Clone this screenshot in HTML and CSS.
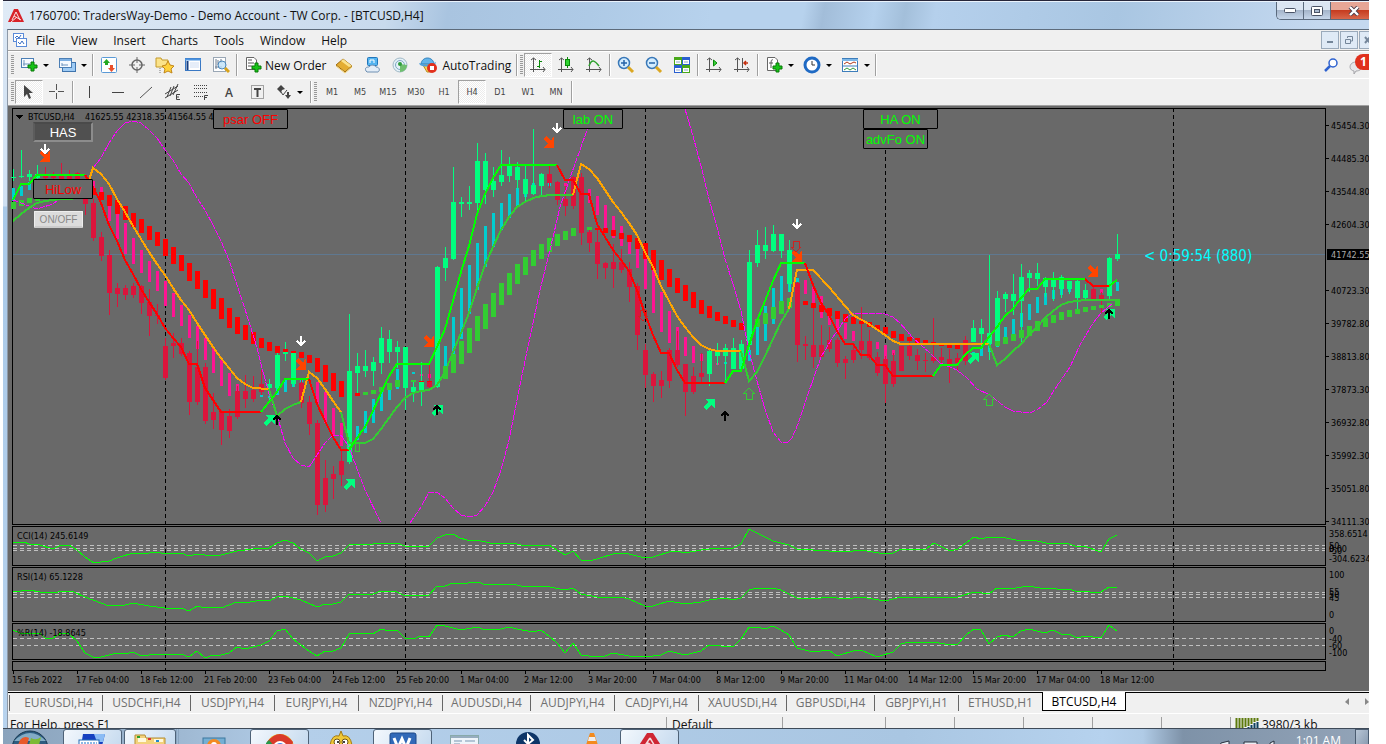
FILE: index.html
```html
<!DOCTYPE html>
<html lang="en">
<head>
    <meta charset="UTF-8">
    <meta name="viewport" content="width=device-width, initial-scale=1.0">
    <title>1760700: TradersWay-Demo - [BTCUSD,H4]</title>
    <link rel="stylesheet" href="styles.css">
</head>
<body>
    <div class="desktop">
        <div class="window">
            <!-- Title bar -->
            <header class="title-bar">
                <svg class="logo" width="16" height="16" viewBox="0 0 16 16"><path d="M6 1H10L16 14H0Z" fill="#d8232a"/><path d="M8 4L4 12M8 4L12 12M6 8L13 12M3 14L9 9" stroke="#fbe4e4" fill="none"/></svg>
                <h1>1760700: TradersWay-Demo - Demo Account - TW Corp. - [BTCUSD,H4]</h1>
                <div class="window-buttons">
                    <button class="minimize" aria-label="Minimize"><svg width="12" height="5"><rect x=".5" y=".5" width="11" height="4" rx="1" fill="#fff" stroke="#4a5366"/></svg></button>
                    <button class="maximize" aria-label="Maximize"><svg width="12" height="10"><rect x=".5" y=".5" width="11" height="9" rx="1" fill="#fff" stroke="#4a5366"/><rect x="3.5" y="3.5" width="5" height="3" fill="#a9b9cf" stroke="#4a5366"/></svg></button>
                    <button class="close" aria-label="Close"><svg width="12" height="10" viewBox="0 0 12 10"><path d="M2 1L10 9M10 1L2 9" stroke="#4a3a48" stroke-width="4"/><path d="M2 1L10 9M10 1L2 9" stroke="#fff" stroke-width="2.4"/></svg></button>
                </div>
            </header>

            <div class="client">
                <!-- Menu -->
                <nav class="menu-bar">
                    <svg width="16" height="16" viewBox="0 0 16 16"><rect x="1.5" y="1.5" width="10" height="8" fill="#fff" stroke="#5b8bd8"/><path d="M3 6L5 4L7 6L9 3" stroke="#3b6fc4" fill="none"/><rect x="4.5" y="6.5" width="10" height="8" fill="#fff" stroke="#5b8bd8"/><path d="M6 10L8 12L10 9L12 12" stroke="#3b6fc4" fill="none"/></svg>
                    <a href="#">File</a><a href="#">View</a><a href="#">Insert</a><a href="#">Charts</a><a href="#">Tools</a><a href="#">Window</a><a href="#">Help</a>
                    <div class="child-buttons">
                        <button aria-label="Minimize chart"><svg width="8" height="8"><path d="M1 6H7" stroke="#74869a" stroke-width="2"/></svg></button>
                        <button aria-label="Restore chart"><svg width="8" height="8"><path d="M2.5 2V.5H7.5V5H6M.5 3.5H5.5V7.5H.5Z" fill="none" stroke="#74869a"/></svg></button>
                        <button aria-label="Close chart"><svg width="8" height="8"><path d="M1 1L6 7M6 1L1 7" stroke="#74869a" stroke-width="2"/></svg></button>
                    </div>
                </nav>

                <!-- Standard toolbar -->
                <div class="toolbar">
                    <span class="grip"></span>
                    <button class="tool drop" aria-label="New chart"><svg width="18" height="18" viewBox="0 0 18 18"><rect x="1.5" y="2.5" width="12" height="9" fill="#f6faff" stroke="#4c7fb5"/><path d="M4 4V10M3 8H10" stroke="#6d93bd"/><path d="M8 9H11V6H14V9H17V12H14V15H11V12H8Z" fill="#16c316" stroke="#087808"/></svg></button>
                    <button class="tool drop" aria-label="Profiles"><svg width="18" height="18" viewBox="0 0 18 18"><rect x="4.5" y="6.5" width="13" height="9" fill="#9ecbf5" stroke="#3f74ad"/><rect x="1.5" y="2.5" width="12" height="9" fill="#f6faff" stroke="#4c7fb5"/><path d="M2 4H13" stroke="#7eb0e3" stroke-width="2"/><path d="M4 7V10M4 9H10" stroke="#6d93bd"/></svg></button>
                    <span class="separator"></span>
                    <button class="tool" aria-label="Market Watch"><svg width="18" height="18" viewBox="0 0 18 18"><rect x="1.5" y="1.5" width="15" height="15" rx="1" fill="#fff" stroke="#5a9ad6"/><path d="M6.5 3L10 7H8V9H5V7H3Z" fill="#23a823"/><path d="M11.500 16L8 12H10V9H13V12H15Z" fill="#e8502c"/></svg></button>
                    <button class="tool" aria-label="Data Window"><svg width="18" height="18" viewBox="0 0 18 18"><circle cx="9" cy="9" r="5" fill="none" stroke="#666" stroke-width="1.5"/><path d="M9 1V7M9 11V17M1 9H7M11 9H17" stroke="#666"/></svg></button>
                    <button class="tool" aria-label="Navigator"><svg width="20" height="18" viewBox="0 0 20 18"><path d="M1 2H6L7 4H13V11H1Z" fill="#fbe38a" stroke="#c49a2a"/><path d="M5 12V17" stroke="#777" stroke-dasharray="1 1"/><path d="M13 5L15 9L19 10L16 13L17 17L13 15L9 17L10 13L7 10L11 9Z" fill="#ffd23c" stroke="#c1861a"/></svg></button>
                    <button class="tool" aria-label="Terminal"><svg width="18" height="18" viewBox="0 0 18 18"><rect x="1.5" y="2.5" width="15" height="12" fill="#fff" stroke="#3a78c3"/><path d="M1 3.5H17" stroke="#4d94e0" stroke-width="2"/><path d="M3.5 5V14" stroke="#173e80" stroke-width="2"/><path d="M6 7H15M6 9H15M6 11H15" stroke="#cddcf2"/></svg></button>
                    <button class="tool" aria-label="Strategy Tester"><svg width="18" height="18" viewBox="0 0 18 18"><rect x="1.5" y="1.5" width="12" height="14" fill="#fff" stroke="#9aa7b5"/><path d="M4 3V13M3 11H10M6 4V9M9 3V7" stroke="#6d7d90"/><circle cx="10" cy="9" r="4" fill="#bfe1f8" fill-opacity=".8" stroke="#4b87bb"/><path d="M13 12L17 16" stroke="#d8a21b" stroke-width="3"/></svg></button>
                    <span class="separator"></span>
                    <button class="tool text"><svg width="18" height="18" viewBox="0 0 18 18"><path d="M2.5 1.5H10L12.5 4V13.5H2.5Z" fill="#fff" stroke="#666"/><path d="M4 4H8M4 7H10M4 10H8" stroke="#555"/><path d="M8 10H11V7H14V10H17V13H14V16H11V13H8Z" fill="#16c316" stroke="#087808"/></svg>New Order</button>
                    <button class="tool" aria-label="MetaEditor"><svg width="18" height="18" viewBox="0 0 18 18"><path d="M1 9L8 3L17 10L10 16Z" fill="#e4ad31" stroke="#9d6b11"/><path d="M8 3L17 10L14 11L6 5Z" fill="#fbe28c"/><path d="M1 10L10 17L17 11" stroke="#f0cf71" fill="none"/></svg></button>
                    <button class="tool" aria-label="Community"><svg width="18" height="18" viewBox="0 0 18 18"><rect x="4.5" y="1.5" width="10" height="8" rx="1" fill="#54b4f0" stroke="#2276bb"/><path d="M7 7V4H11V7" stroke="#fff" fill="none"/><path d="M3 15C1 11 5 11 6 11C8 8 12 9 13 11C17 11 17 15 15 16H4Z" fill="#e3edf7" stroke="#6e8fb2"/></svg></button>
                    <button class="tool" aria-label="Signals"><svg width="18" height="18" viewBox="0 0 18 18"><circle cx="9" cy="9" r="7" fill="#e4f1f8" stroke="#a0b8c6"/><circle cx="9" cy="9" r="4.5" fill="none" stroke="#7fa8c2"/><path d="M9 8V16C13 16 16 13 16 9Z" fill="#6fbf6f"/><circle cx="9" cy="8" r="2" fill="#2f9c3c"/></svg></button>
                    <button class="tool text"><svg width="20" height="18" viewBox="0 0 20 18"><path d="M2 8C3 0 14 0 15 8Z" fill="#63b4ea" stroke="#2e7fba"/><path d="M4 9L15 9L12 16H8Z" fill="#f8d457" stroke="#b98c1c"/><path d="M0 7C4 9 13 9 17 6L16 9C11 11 5 11 1 9Z" fill="#4da0dc"/><circle cx="13" cy="12" r="5" fill="#e2301d"/><rect x="11" y="10" width="4" height="4" fill="#fff"/></svg>AutoTrading</button>
                    <span class="separator"></span>
                    <span class="grip"></span>
                    <button class="tool active" aria-label="Bar chart"><svg width="16" height="16" viewBox="0 0 16 16"><path d="M3.5 1V15M0 12.500H15M1 3L3.500 1L6 3M13 10L15 12.500L13 15" stroke="#555" fill="none"/><path d="M9.500 3V11M9 4.500H12M7 9.500H9" stroke="#0a8a0a"/></svg></button>
                    <button class="tool" aria-label="Candlesticks"><svg width="16" height="16" viewBox="0 0 16 16"><path d="M3.5 1V15M0 12.500H15M1 3L3.500 1L6 3M13 10L15 12.500L13 15" stroke="#555" fill="none"/><path d="M9.5 0V11" stroke="#0a8a0a"/><rect x="7.5" y="2.5" width="4" height="6" fill="#2fd42f" stroke="#0a8a0a"/></svg></button>
                    <button class="tool" aria-label="Line chart"><svg width="16" height="16" viewBox="0 0 16 16"><path d="M3.5 1V15M0 12.500H15M1 3L3.500 1L6 3M13 10L15 12.500L13 15" stroke="#555" fill="none"/><path d="M3 9C6 1 9 4 13 9" stroke="#2ca02c" stroke-width="1.5" fill="none"/></svg></button>
                    <span class="separator"></span>
                    <button class="tool" aria-label="Zoom in"><svg width="18" height="18" viewBox="0 0 18 18"><circle cx="7" cy="7" r="5.5" fill="#d4edff" stroke="#3978b8" stroke-width="1.5"/><path d="M4 7H10M7 4V10" stroke="#2563a8" stroke-width="1.5"/><path d="M11 11L16 16" stroke="#dba722" stroke-width="3"/></svg></button>
                    <button class="tool" aria-label="Zoom out"><svg width="18" height="18" viewBox="0 0 18 18"><circle cx="7" cy="7" r="5.5" fill="#d4edff" stroke="#3978b8" stroke-width="1.5"/><path d="M4 7H10" stroke="#2563a8" stroke-width="1.5"/><path d="M11 11L16 16" stroke="#dba722" stroke-width="3"/></svg></button>
                    <button class="tool" aria-label="Tile windows"><svg width="18" height="18" viewBox="0 0 18 18"><path d="M1 1H9V9H1ZM9 9H17V17H9Z" fill="#48a81a"/><path d="M9 1H17V9H9ZM1 9H9V17H1Z" fill="#2a5fd0"/><path d="M2 4H8V8H2ZM10 4H16V8H10ZM2 12H8V16H2ZM10 12H16V16H10Z" fill="#fff"/><path d="M3 6H7M11 6H15M3 14H7M11 14H15" stroke="#8fa6c8"/></svg></button>
                    <span class="separator"></span>
                    <button class="tool" aria-label="Auto scroll"><svg width="16" height="16" viewBox="0 0 16 16"><path d="M3.5 1V15M0 12.500H15M1 3L3.500 1L6 3M13 10L15 12.500L13 15" stroke="#555" fill="none"/><path d="M7.500 3V9L11 6Z" fill="#3ad43a" stroke="#0a8a0a"/></svg></button>
                    <button class="tool" aria-label="Chart shift"><svg width="16" height="16" viewBox="0 0 16 16"><path d="M3.5 1V15M0 12.500H15M1 3L3.500 1L6 3M13 10L15 12.500L13 15M8.500 1V11" stroke="#555" fill="none"/><path d="M14 6H10M12 4L10 6L12 8" stroke="#c43010" stroke-width="1.5" fill="none"/></svg></button>
                    <span class="separator"></span>
                    <button class="tool drop" aria-label="Indicators"><svg width="18" height="18" viewBox="0 0 18 18"><path d="M2.5 1.5H10L12.5 4V14.5H2.5Z" fill="#fff" stroke="#666"/><path d="M8 4C6 3 6 5 6 12M4 7H8" stroke="#555" fill="none"/><path d="M8 10H11V7H14V10H17V13H14V16H11V13H8Z" fill="#16c316" stroke="#087808"/></svg></button>
                    <button class="tool drop" aria-label="Periods"><svg width="18" height="18" viewBox="0 0 18 18"><circle cx="9" cy="9" r="7" fill="#fff" stroke="#1f6ac4" stroke-width="3"/><path d="M9 5V9H12" stroke="#333" fill="none"/></svg></button>
                    <button class="tool drop" aria-label="Templates"><svg width="18" height="16" viewBox="0 0 18 16"><rect x="1.5" y="1.5" width="15" height="13" fill="#fff" stroke="#3d7dbb"/><path d="M1 3H17" stroke="#7cb7e8" stroke-width="2"/><path d="M3 7L6 5L9 7L13 5L15 6" stroke="#b03a1a" fill="none"/><path d="M1 9H17" stroke="#3d7dbb"/><path d="M3 13L6 11L9 13L12 11L15 13" stroke="#2e9a3c" fill="none"/></svg></button>
                    <span class="separator"></span>
                    <div class="toolbar-right">
                        <button aria-label="Search"><svg width="14" height="14" viewBox="0 0 14 14"><circle cx="9" cy="5" r="4" fill="#fff" stroke="#2e62cf" stroke-width="1.5"/><path d="M6 8L1 13" stroke="#2e62cf" stroke-width="2.5"/></svg></button>
                        <button class="chat" aria-label="Messages"><svg width="14" height="14" viewBox="0 0 14 14"><path d="M7 1C15 1 15 10 7 10L5 13V10C-1 9 0 1 7 1Z" fill="#e6e6e8" stroke="#a5a5aa"/></svg><span class="badge">1</span></button>
                    </div>
                </div>

                <!-- Line studies and timeframes -->
                <div class="toolbar">
                    <span class="grip"></span>
                    <button class="tool active" aria-label="Cursor"><svg width="14" height="16" viewBox="0 0 14 16"><path d="M2 1V13L5 10L7 15L9 14L7 9H11Z" fill="#444"/></svg></button>
                    <button class="tool" aria-label="Crosshair"><svg width="16" height="16"><path d="M7.5 0V6M7.5 9V15M0 7.5H6M9 7.5H15" stroke="#555"/></svg></button>
                    <span class="separator"></span>
                    <button class="tool" aria-label="Vertical line"><svg width="16" height="16"><path d="M8.5 2V14" stroke="#444"/></svg></button>
                    <button class="tool" aria-label="Horizontal line"><svg width="16" height="16"><path d="M3 8.5H15" stroke="#444"/></svg></button>
                    <button class="tool" aria-label="Trendline"><svg width="16" height="16"><path d="M3 14L15 3" stroke="#555"/></svg></button>
                    <button class="tool" aria-label="Equidistant channel"><svg width="18" height="18"><path d="M1 11L14 3M1 15L14 7M3 14L7 4M6 13L10 3M9 12L14 1" stroke="#444"/><path d="M16 11.500H12.500V16.500H16M12 14H15" stroke="#444" fill="none"/></svg></button>
                    <button class="tool" aria-label="Fibonacci"><svg width="18" height="18"><path d="M2 2.5H15M2 5.5H15M2 9.5H15M2 13.5H11" stroke="#444" stroke-dasharray="1 1"/><path d="M16 12.5H12.5V17M12 14.500H15" stroke="#444" fill="none"/></svg></button>
                    <button class="tool letter" aria-label="Text">A</button>
                    <button class="tool" aria-label="Text label"><svg width="16" height="16"><rect x="2.5" y="1.5" width="12" height="13" fill="none" stroke="#555" stroke-dasharray="1 1"/><path d="M5 5H12M8.500 5V13" stroke="#444" stroke-width="2"/></svg></button>
                    <button class="tool drop" aria-label="Arrows"><svg width="16" height="16"><path d="M5 1L9 5L6 6L5 9L1 5Z" fill="#444"/><path d="M9 11H11V8H13V11H15L12 15Z" fill="#444"/><path d="M5 8L7 11L11 6" fill="none" stroke="#444"/></svg></button>
                    <span class="separator"></span>
                    <span class="grip"></span>
                    <button class="tool period">M1</button><button class="tool period">M5</button><button class="tool period">M15</button><button class="tool period">M30</button><button class="tool period">H1</button><button class="tool period active">H4</button><button class="tool period">D1</button><button class="tool period">W1</button><button class="tool period">MN</button>
                    <span class="separator"></span>
                </div>

                <!-- Chart, drawn by chart.js -->
                <main class="chart">
                    <svg id="chart" role="img" aria-label="BTCUSD H4 chart"></svg>
                    <button class="switch off psar">psar OFF</button>
                    <button class="switch on lab">lab ON</button>
                    <button class="switch on ha">HA ON</button>
                    <button class="switch on advfo">advFo ON</button>
                    <button class="switch has">HAS</button>
                    <button class="switch off hilow">HiLow</button>
                    <button class="switch onoff">ON/OFF</button>
                </main>

                <!-- Chart tabs -->
                <nav class="tabs">
                    <button class="first">EURUSDi,H4</button><button class="wide">USDCHFi,H4</button><button>USDJPYi,H4</button><button>EURJPYi,H4</button><button>NZDJPYi,H4</button><button class="wide">AUDUSDi,H4</button><button>AUDJPYi,H4</button><button>CADJPYi,H4</button><button class="wide">XAUUSDi,H4</button><button class="wide">GBPUSDi,H4</button><button>GBPJPYi,H1</button><button>ETHUSD,H1</button><button class="current">BTCUSD,H4</button>
                    <div class="tab-scroll"><svg width="24" height="8"><path d="M4 0V7L0 4ZM20 0V7L24 4Z" fill="#888"/></svg></div>
                </nav>

                <footer class="status-bar">
                    <span class="help">For Help, press F1</span>
                    <span class="profile">Default</span>
                    <span class="time"></span><span class="cell"></span><span class="cell"></span><span class="cell"></span><span class="cell"></span><span class="cell"></span>
                    <span class="traffic"><svg width="24" height="14"><path d="M1.5 1V14M4.5 1V13M7.5 1V11M10.5 1V10M13.5 1V9M16.5 1V7M19.5 1V5M22.5 1V4" stroke="#5d7a0c" stroke-width="2"/><path d="M7.5 12V14M10.5 11V14M13.5 10V14M16.5 8V14M19.5 6V14M22.5 5V14" stroke="#0d4060" stroke-width="2"/></svg>3980/3 kb</span>
                </footer>
            </div>
        </div>

        <!-- Taskbar -->
        <div class="taskbar">
            <button class="start" aria-label="Start"><svg width="40" height="16"><circle cx="20" cy="20" r="18" fill="#2d5c80" stroke="#183850"/><path d="M4 12Q20-4 36 12Z" fill="#82abc5"/><path d="M10 11Q14 6 19 9L17 16H8Z" fill="#e8592b"/><path d="M21 9Q26 12 31 8L29 16H19Z" fill="#7cba35"/></svg></button>
            <button class="task open" aria-label="Keyboard"><svg width="32" height="16"><path d="M6 4H28L25 16H4Z" fill="#1540c0"/><path d="M17 4H28L26 12H20Z" fill="#8bbcf5"/><rect x="2" y="10" width="20" height="6" fill="#fff" stroke="#256cb5"/><path d="M4 13H20M4 15H20" stroke="#1973cc" stroke-dasharray="2 1"/></svg></button>
            <button class="task folder open" aria-label="Explorer"><svg width="32" height="16"><path d="M1 16V5H11L12 8H31V16Z" fill="#f2d27c" stroke="#b58e35"/><path d="M4 8H12V12H4ZM20 9H29V12H20Z" fill="#fff8dc"/><path d="M3 7H6" stroke="#2ba02b" stroke-width="2"/><path d="M14 9H17" stroke="#d33" stroke-width="2"/><path d="M22 11H25" stroke="#28c" stroke-width="2"/></svg></button>
            <button class="task stacked" aria-label="Media"><svg width="26" height="16"><rect x="1" y="9" width="22" height="7" fill="#75afd4" stroke="#3d789e"/><circle cx="12" cy="17" r="7" fill="#f38a21"/><circle cx="12" cy="16" r="3" fill="#fff"/></svg></button>
            <button class="task open" aria-label="Chrome"><svg width="32" height="16"><circle cx="16" cy="18" r="14" fill="#e8c82c"/><path d="M3 12Q16-4 29 12L28 16H3Z" fill="#da3a2b"/><path d="M2 16V13L5 10L10 16Z" fill="#27984b"/><circle cx="16" cy="18" r="7" fill="#fff"/><circle cx="16" cy="18" r="5" fill="#4285e8"/></svg></button>
            <button class="task" aria-label="Chick"><svg width="26" height="16"><path d="M2 16Q4 5 11 7L13 2L15 7Q22 5 24 16Z" fill="#f0c836" stroke="#a47a14"/><circle cx="9" cy="13" r="3" fill="#fff" stroke="#6d5216"/><circle cx="17" cy="13" r="3" fill="#fff" stroke="#6d5216"/><circle cx="10" cy="13" r="1"/><circle cx="16" cy="13" r="1"/></svg></button>
            <button class="task open" aria-label="Word"><svg width="32" height="16"><rect x="3" y="3" width="26" height="14" rx="2" fill="#3169b8" stroke="#1d4889"/><path d="M7 8L11 18L15 9L19 18L23 8" stroke="#fff" stroke-width="3" fill="none"/></svg></button>
            <button class="task" aria-label="Document"><svg width="32" height="16"><rect x="2.5" y="6.5" width="28" height="12" fill="#eef4fa" stroke="#8aa"/><path d="M3 8H30" stroke="#96adbf" stroke-width="2"/><path d="M6 12H14M17 12H27M6 15H12" stroke="#7895b0"/></svg></button>
            <button class="task" aria-label="Bluetooth"><svg width="26" height="16"><circle cx="13" cy="15" r="12" fill="#0d3568"/><path d="M13 16V6L18 11L13 15L9 11" stroke="#fff" stroke-width="2" fill="none"/></svg></button>
            <button class="task" aria-label="VLC"><svg width="20" height="16"><path d="M8 4H12L16 16H4Z" fill="#f38a1d"/><path d="M7 8H13L14 12H6Z" fill="#eee"/></svg></button>
            <button class="task metatrader open" aria-label="MetaTrader"><svg width="28" height="16"><path d="M11 3H17L28 20H0Z" fill="#cf2633"/><path d="M14 8L6 20M14 8L20 18M11 12L19 18" stroke="#f3dcdf" stroke-width="1.5" fill="none"/></svg></button>
            <div class="tray"><svg width="70" height="16"><path d="M7 14L15 12V16H6ZM30 13H43V16H30ZM56 14L60 12V16H56Z" fill="#e8eef5" stroke="#26313e"/></svg><time>1:01 AM</time></div>
            <button class="show-desktop" aria-label="Show desktop"></button>
        </div>
    </div>
    <script src="chart.js"></script>
</body>
</html>
```
FILE: styles.css
```css
:root {
    --chart-bg: #696969;
    --panel-bg: #f0f0f0;
    --ui-font: "Open Sans", "Noto Sans", sans-serif;
    --chart-font: "DejaVu Sans Condensed", "DejaVu Sans", sans-serif;
}

* {
    box-sizing: border-box;
}
body {
    margin: 0;
    background: #fff;
    color: #111;
    font-family: var(--ui-font);
    font-size: 12px;
    overflow: hidden;
}
button {
    margin: 0;
    padding: 0;
    border: 0;
    background: none;
    color: inherit;
    font: inherit;
}
svg {
    display: block;
    flex: none;
}
.desktop {
    height: 100vh;
    margin: 0 17px 0 3px;
    display: flex;
    flex-direction: column;
    overflow: hidden;
}
.window {
    flex: 1;
    min-height: 0;
    padding-left: 4px;
    background: linear-gradient(#dbe7f4, #cfe0f2 205px, #a9c9e8 206px, #b8d3ee);
    border-top: 1px solid #26263a;
    overflow: hidden;
}

/* Title bar */
.title-bar {
    display: flex;
    align-items: center;
    height: 28px;
    margin-left: -4px;
    padding-left: 5px;
    background: linear-gradient(100deg, #dfeaf6 0, #c8daed 380px, #a9c4e0 440px, #aecae6 580px, #b7d2ed 700px, #b7d2ed 790px, #a2bdd9 810px, #b5d1ed 860px, #a3bfda 890px, #b5d0ec 920px, #a9c6e2 1100px, #c4d8ef 1300px);
    border-top: 1px solid #eaf3fc;
}
.title-bar h1 {
    flex: 1;
    margin: 0 0 0 5px;
    font-size: 12px;
    font-weight: normal;
}
.window-buttons {
    display: flex;
    align-self: flex-start;
    height: 18px;
    border: 1px solid #5b6a7d;
    border-width: 0 0 1px 1px;
    border-radius: 0 0 0 5px;
    overflow: hidden;
}
.window-buttons button {
    display: flex;
    justify-content: center;
    align-items: center;
    width: 27px;
    border-right: 1px solid #5b6a7d;
    background: linear-gradient(#dbe5f2 45%, #a5b5ca 50%, #c6d6ea);
}
.window-buttons .close {
    width: 38px;
    padding-left: 8px;
    border: 0;
    background: linear-gradient(#e7a696 45%, #c63c20 50%, #d8674b);
}

/* Menu */
.client {
    background: var(--panel-bg);
    border-left: 1px solid #8d99a8;
    border-top: 1px solid #5d6b7b;
}
.menu-bar {
    display: flex;
    align-items: center;
    height: 21px;
    padding-left: 4px;
    border-bottom: 1px solid #a0a0a0;
}
.menu-bar a {
    margin-left: 16px;
    color: #111;
    text-decoration: none;
}
.menu-bar svg + a {
    margin-left: 8px;
}
.child-buttons {
    display: flex;
    gap: 1px;
    width: 48px;
    margin-left: auto;
    overflow: hidden;
}
.child-buttons button {
    display: flex;
    flex: none;
    justify-content: center;
    align-items: center;
    width: 18px;
    height: 18px;
    border: 1px solid #9aaabb;
    background: #dfeaf6;
}

/* Toolbars */
.toolbar {
    display: flex;
    align-items: center;
    height: 27px;
    padding-left: 2px;
    border-top: 1px solid #fff;
}
.grip {
    width: 3px;
    height: 20px;
    margin: 0 1px;
    background: repeating-linear-gradient(#999 0 1px, transparent 1px 2px);
}
.separator {
    width: 2px;
    height: 22px;
    margin: 0 1px;
    border-left: 1px solid #a0a0a0;
    border-right: 1px solid #fff;
}
.tool {
    display: flex;
    flex: none;
    justify-content: center;
    align-items: center;
    width: 28px;
    height: 24px;
}
.tool.text {
    width: auto;
    gap: 3px;
    padding: 0 4px 0 5px;
}
.tool.drop {
    justify-content: flex-start;
    gap: 5px;
    width: 38px;
    padding-left: 5px;
}
.tool.drop::after {
    content: "";
    border: 3px solid transparent;
    border-top-color: #000;
    border-bottom: 0;
}
.tool.active {
    border: 1px solid #a0a0a0;
    border-right-color: #fff;
    border-bottom-color: #fff;
    background: repeating-conic-gradient(#fff 0 25%, #ececec 0 50%) 0 0 / 2px 2px;
}
.tool.period {
    color: #444;
    font-family: var(--chart-font);
    font-size: 9px;
}
.tool.letter {
    color: #444;
    font-size: 12px;
    font-weight: 600;
}
.toolbar-right {
    display: flex;
    align-items: center;
    gap: 11px;
    margin-left: auto;
}
.chat {
    position: relative;
    width: 20px;
    padding-top: 6px;
}
.badge {
    position: absolute;
    top: -1px;
    left: 6px;
    width: 14px;
    height: 16px;
    padding-left: 5px;
    border-radius: 8px 0 0 8px;
    background: #e0301c;
    color: #fff;
    font-weight: bold;
    line-height: 16px;
    text-align: left;
}

/* Chart */
.chart {
    position: relative;
    overflow: hidden;
    background: var(--chart-bg);
    border-top: 1px solid #a0a0a0;
}
#chart {
    width: 100%;
    height: 585px;
}
#chart text {
    font-family: var(--chart-font);
    font-size: 9px;
}
#chart .countdown {
    font-size: 15px;
}
/* On-chart switches, pinned to their places over the plot */
.switch {
    position: absolute;
    height: 20px;
    border: 1px solid #000;
    border-radius: 1px;
    background: var(--chart-bg);
    font-family: "Liberation Sans", Arial, sans-serif;
    font-size: 13px;
}
.on {
    color: #0f0;
}
.off {
    color: #f00;
}
.psar {
    left: 205px;
    top: 3px;
    width: 75px;
}
.lab {
    left: 555px;
    top: 3px;
    width: 60px;
}
.ha {
    left: 855px;
    top: 3px;
    width: 75px;
}
.advfo {
    left: 855px;
    top: 23px;
    width: 65px;
}
.has {
    left: 25px;
    top: 16px;
    width: 60px;
    border: 2px solid #8c8c8c;
    border-top-color: #4a4a4a;
    border-left-color: #5c5c5c;
    background: #505050;
    color: #fff;
}
.hilow {
    left: 25px;
    top: 73px;
    width: 60px;
}
.onoff {
    left: 26px;
    top: 105px;
    width: 49px;
    height: 17px;
    border: 1px solid #eee;
    border-bottom: 2px solid #ccc;
    background: #dcdcdc;
    color: #888;
    font-size: 10px;
}

/* Chart tabs */
.tabs {
    display: flex;
    align-items: flex-start;
    height: 21px;
    margin-top: 1px;
    border-top: 1px solid #000;
}
.tabs button {
    flex: none;
    width: 84px;
    height: 16px;
    margin-top: 2px;
    border-right: 1px solid #666;
    color: #707070;
    line-height: 14px;
}
.tabs .wide {
    width: 88px;
}
.tabs .first {
    width: 94px;
    margin-left: 1px;
    padding-left: 5px;
    border-left: 1px solid #666;
}
.tabs .current {
    height: 19px;
    margin-top: -1px;
    margin-left: -1px;
    border: 1px solid #000;
    border-top: 0;
    background: #fff;
    color: #000;
    line-height: 20px;
}
.tab-scroll {
    margin: 5px 0 0 auto;
}

.status-bar {
    display: flex;
    height: 16px;
    padding-left: 2px;
    border-top: 1px solid #fff;
    overflow: hidden;
    line-height: 16px;
}
.status-bar span {
    height: 24px;
    margin-top: 3px;
    border-left: 1px solid #a0a0a0;
}
.status-bar .help {
    flex: 1;
    border: 0;
}
.status-bar .profile {
    width: 116px;
    padding-left: 5px;
}
.status-bar .time {
    width: 103px;
}
.status-bar .cell {
    width: 69px;
}
.status-bar .traffic {
    display: flex;
    gap: 3px;
    width: 139px;
    padding-left: 4px;
}

/* Taskbar */
.taskbar {
    display: flex;
    flex: none;
    height: 16px;
    overflow: hidden;
    border-top: 1px solid #3e4a58;
    background: linear-gradient(90deg, #8aa3bc, #9fb9d3 180px, #b4cfea 300px, #a9c6e2 900px, #b6d2ee 1100px, #b0cbe6 1140px, #7e92a8 1180px, #93a4b8);
}
.start {
    width: 60px;
    padding-left: 7px;
}
.task {
    display: flex;
    justify-content: center;
    width: 64px;
    height: 24px;
}
.task.open {
    width: 59px;
    border: 1px solid #4e6277;
    border-radius: 3px;
    background: linear-gradient(120deg, #f3f8fd, #c4d9ee);
}
.task.folder {
    width: 52px;
    margin-left: 2px;
}
.task.stacked {
    width: 74px;
    border-left: 3px double #8aa5c0;
}
.task.metatrader {
    margin-left: -4px;
}
.tray {
    display: flex;
    gap: 12px;
    margin-left: auto;
    padding-right: 14px;
    color: #fff;
}
.tray time {
    margin-top: 3px;
    line-height: 18px;
}
.show-desktop {
    width: 14px;
    height: 24px;
    border: 1px solid #4b5c70;
    background: linear-gradient(120deg, #b8c6d6, #8093a9);
}
```
FILE: chart.js
```js
// Bars are 8px apart, bar 0 is centred on x = 13
const barX = i => 13 + i * 8;

const GREEN = "#00ff7f", RED = "#dc143c", LIME = "#00ff00", SCARLET = "#ff0000";
const BAND_UP = "#32cd32", ORANGE = "#ffa500", CYAN = "#00ced1", PINK = "#ff1493";

// high, top of body, bottom of body, low
const candles = [
    [169,177,178,181],[150,176,177,178],[170,174,177,181],[165,174,178,185],[167,175,178,180],[172,175,178,180],[163,175,180,182],[170,175,180,182],[172,173,180,199],[180,182,204,215],
    [199,203,238,241],[232,237,256,261],[250,255,293,315],[283,288,294,307],[285,288,295,300],[283,286,295,298],[285,286,303,314],[289,302,316,336],[304,315,316,324],[338,346,378,380],
    [333,343,346,358],[338,343,354,356],[351,353,402,415],[341,367,402,405],[363,367,421,424],[393,412,420,429],[410,412,430,445],[409,416,431,438],[386,391,417,419],[375,391,399,408],
    [376,390,399,402],[370,384,392,395],[379,384,388,402],[351,355,388,392],[342,352,354,361],[351,352,384,387],[380,383,403,408],[396,402,424,435],[420,423,505,515],[460,478,505,512],
    [466,474,479,499],[450,461,475,486],[314,371,462,464],[353,366,373,395],[350,366,371,377],[357,362,371,386],[327,338,363,374],[330,339,352,363],[341,347,352,368],[347,347,388,410],
    [382,387,392,402],[362,382,392,406],[365,382,387,388],[266,267,387,388],[247,258,268,281],[167,202,259,260],[197,202,204,217],[186,202,204,210],[143,161,203,214],[153,161,190,204],
    [167,181,190,197],[150,175,182,186],[157,166,176,182],[162,167,180,189],[166,179,194,201],[129,185,194,195],[173,174,186,195],[166,174,183,188],[181,182,200,205],[186,199,206,216],
    [176,177,206,209],[173,177,233,245],[227,232,243,252],[230,242,264,279],[262,263,268,279],[244,262,269,288],[249,262,270,273],[262,269,287,302],[283,286,335,350],[344,350,375,388],
    [372,374,386,402],[371,380,386,398],[348,350,381,388],[331,350,365,367],[364,364,392,416],[367,376,392,394],[353,373,377,383],[348,351,374,386],[343,352,356,365],[344,348,356,382],
    [338,348,369,369],[340,344,369,370],[250,262,345,350],[230,245,263,267],[227,245,251,259],[225,234,251,252],[234,234,251,258],[240,250,284,292],[282,283,345,362],[336,344,346,360],
    [308,345,357,368],[325,345,357,357],[327,340,349,352],[338,340,363,367],[356,359,363,379],[346,350,360,363],[307,341,350,359],[330,341,358,360],[352,357,373,376],[356,359,384,403],
    [353,361,384,387],[346,346,371,371],[340,346,356,360],[349,355,361,370],[353,360,361,372],[318,357,361,363],[348,357,360,363],[349,359,364,383],[353,358,363,370],[336,340,361,365],
    [320,328,342,342],[319,328,334,346],[255,333,344,360],[291,298,346,347],[292,294,299,312],[274,294,301,315],[264,277,301,342],[270,273,278,292],[263,273,279,286],[277,278,287,297],
    [272,278,287,301],[275,277,289,298],[281,281,289,294],[280,281,298,310],[284,290,298,300],[287,289,299,299],[292,295,299,313],[257,258,296,300],[234,254,259,261]
];
// ranges of rising bars
const rising = [[0,3],[32,35],[42,51],[53,66],[87,97],[120,134],[137,138]];
const isRising = i => rising.some(r => i >= r[0] && i <= r[1]);

// Slow trend histogram: bar, top, bottom
const slowUp = [
    [0,202,209],[1,200,206],[2,198,203],[3,197,201],[44,392,395],[45,390,394],[46,387,392],[47,383,390],[48,380,387],[50,380,382],[54,366,379],[55,354,373],[56,341,364],[57,328,353],[58,316,341],[59,304,329],
    [60,293,317],[61,283,305],[62,273,295],[63,264,284],[64,257,275],[65,250,266],[66,244,259],[67,238,252],[68,234,246],[69,231,240],[70,228,236],[72,227,230],[93,319,327],[94,313,324],[95,307,319],[96,301,314],[97,298,308],
    [123,341,346],[124,337,344],[125,334,341],[126,330,338],[127,326,336],[128,321,331],[129,318,327],[130,315,323],[131,312,320],[132,310,317],[133,309,314],[134,307,312],[135,306,310],[136,305,308],[137,303,307],[138,299,306]
];
const slowDown = [
    [10,188,195],[11,192,200],[12,195,206],[13,200,214],[14,206,220],[15,213,227],[16,219,233],[17,226,240],[18,232,246],[19,239,256],[20,247,264],[21,255,271],[22,263,281],[23,271,289],[24,280,298],[25,289,309],[26,298,319],
    [27,308,328],[28,317,334],[29,325,340],[30,332,344],[31,338,348],[32,342,351],[33,346,353],[34,349,352],[35,351,353],[36,352,358],[37,355,363],[38,358,372],[39,365,382],[40,373,391],[41,381,397],[43,393,396],[51,381,382],[52,381,382],
    [73,228,230],[74,228,233],[75,230,236],[76,233,239],[77,235,242],[78,238,249],[79,243,259],[80,250,270],[81,260,280],[82,269,287],[83,278,293],[84,285,301],[85,292,308],[86,300,314],[87,306,318],[88,312,321],[89,316,324],[90,320,327],[91,323,330],
    [99,301,305],[100,303,308],[101,305,312],[102,308,316],[103,311,319],[104,314,322],[105,317,324],[106,321,324],[107,322,327],[108,325,330],[109,327,334],[110,331,338],[111,334,341],[112,337,341],[113,338,343],[114,340,343],[115,342,343],[116,345,346],[117,344,348],[118,344,349]
];
// Fast trend histogram
const fastUp = [
    [0,188,201],[1,186,196],[2,182,190],[31,395,397],[32,396,398],[33,388,395],[34,380,392],[35,383,387],[36,379,382],[43,426,440],[44,411,433],[45,399,423],[46,392,411],[47,383,400],[48,369,389],[50,372,374],
    [54,346,366],[55,317,354],[56,288,339],[57,265,314],[58,243,290],[59,226,267],[60,213,247],[61,203,230],[62,194,218],[63,188,206],[64,194,197],[65,183,186],[67,183,186],[89,362,364],[92,350,361],[93,327,355],[94,306,341],[95,288,324],[96,276,301],[97,284,292],[98,278,282],
    [120,352,355],[121,348,356],[122,342,352],[123,346,347],[124,327,337],[125,319,334],[126,313,327],[127,304,320],[128,297,313],[129,293,305],[130,290,299],[131,289,295],[132,289,292],[138,282,291]
];
const fastDown = [
    [10,181,190],[11,187,192],[12,206,221],[13,214,239],[14,223,254],[15,238,264],[16,250,273],[17,261,282],[18,271,291],[19,281,306],[20,293,317],[21,305,326],[22,315,338],[23,326,349],[24,338,360],[25,348,373],[26,360,386],[27,373,396],[28,384,391],
    [38,382,404],[39,392,423],[40,408,436],[41,423,446],[51,374,376],[52,374,378],[69,183,186],[72,189,203],[73,196,215],[74,205,228],[75,216,238],[76,226,246],[77,242,254],[78,249,268],[79,259,289],[80,270,313],[81,292,332],[82,311,343],[83,327,350],[84,337,356],[85,346,363],[86,354,361],[88,363,365],
    [99,280,294],[100,287,303],[101,296,318],[102,314,325],[103,319,333],[104,323,339],[105,331,341],[108,342,349],[109,345,359],[110,350,355],[136,289,293]
];

// Hi/low channel and moving average, coloured by direction
const trendLines = [
    [BAND_UP, "13,221 21,214 29,208 37,203 45,201 61,199 85,198"],
    [ORANGE, "89,180 93,168 101,174 109,184 117,199 125,212 133,226 141,239 149,252 157,264 165,275 173,288 181,300 189,310 197,323 205,335 213,347 221,358 229,368 237,378 245,384 253,388 269,389"],
    [BAND_UP, "269,389 277,416 285,409 293,405 301,402"],
    [ORANGE, "301,402 309,372 317,378 325,389 333,401 341,412"],
    [BAND_UP, "341,412 349,443 365,443 373,439 381,429 389,418 397,407 405,398 413,393 421,391 429,390 437,385 445,372 453,352 461,333 469,313 477,288 485,265 493,247 501,230 509,217 517,207 525,202 536,197 550,195 573,195"],
    [ORANGE, "573,195 581,164 589,169 597,178 605,190 613,202 621,212 629,223 637,235 645,252 653,267 661,286 669,301 677,316 685,327 693,337 701,345 709,349 717,351 741,351"],
    [BAND_UP, "741,351 749,381 757,372 765,356 773,339 781,322 789,309"],
    [ORANGE, "789,309 797,270 813,270 829,287 845,306 853,315 869,324 885,335 893,341 901,344 989,344"],
    [BAND_UP, "989,344 997,365 1005,359 1013,351 1021,344 1029,335 1037,327 1045,318 1053,311 1061,305 1069,302 1085,300 1117,300"],
    [LIME, "13,200 21,184 29,184 37,175 85,175"],
    [SCARLET, "85,175 93,187 101,203 109,225 117,241 125,260 133,274 141,289 149,302 157,314 165,328 173,338 181,347 189,364 197,364 205,388 213,400 221,412 261,412"],
    [LIME, "261,412 269,402 277,392 285,379 309,379"],
    [SCARLET, "309,379 317,404 325,421 333,437 341,450 349,450"],
    [LIME, "349,450 357,438 365,427 373,411 381,393 389,376 397,364 429,364 437,347 445,329 453,301 461,272 469,246 477,214 485,194 493,178 501,165 557,165"],
    [SCARLET, "557,165 565,180 573,180 581,194 589,194 597,224 605,237 613,250 621,260 629,271 637,290 645,314 653,335 661,353 669,353 677,370 685,383 725,383"],
    [LIME, "725,383 733,371 741,371 749,345 757,321 765,301 773,281 781,263 805,263"],
    [SCARLET, "805,263 813,285 821,303 829,315 837,331 845,344 853,344 861,355 869,355 877,365 885,365 893,376 933,376"],
    [LIME, "933,376 941,365 957,365 965,355 973,348 981,348 989,337 997,327 1005,316 1013,309 1021,298 1029,289 1037,289 1045,279 1085,279"],
    [SCARLET, "1085,279 1093,286 1109,286"],
    [LIME, "1109,286 1117,280"]
];
const envelope = [
    "13,200 21,203 37,209 53,204 61,198 69,193",
    "93,168 101,158 109,143 117,131 125,123 133,121 141,123 149,130 157,138 165,150 173,160 181,174 189,183 197,198 205,210 213,225 221,241 229,260 237,285 243,303 250,325 257,348 263,372 270,397 277,415 285,443 293,458 301,465 309,467 315,458 325,443 333,435 341,435 349,447 353,458 365,490 381,523",
    "410,523 421,507 429,492 437,492 445,498 453,508 461,515 469,517 477,515 485,506 493,492 501,470 509,440 515,410 521,380 530,337 540,290 550,250 560,207 570,178 580,150 587,130 593,109",
    "685,109 693,136 701,166 709,199 717,227 725,259 733,284 741,311 749,351 757,381 765,409 773,432 781,442 787,443 792,438 798,424 807,397 821,357 833,337 845,319 853,313 885,314 893,317 900,323 913,338 930,353 940,363 957,370 967,378 977,389 990,395 1005,407 1013,411 1029,413 1037,410 1047,402 1053,392 1070,367 1080,345 1093,323 1101,313 1113,303"
];
const cci = "13,543 24,542 29,544 40,545 53,549 61,545 69,545 77,550 85,557 94,563 101,562 109,561 117,558 133,553 149,553 157,552 165,554 181,553 189,556 197,554 205,555 221,555 237,551 253,549 269,548 277,543 285,540 293,543 301,549 309,553 317,561 325,557 333,556 341,553 349,545 373,544 397,543 405,546 413,547 429,546 437,538 445,535 453,534 460,538 467,540 477,540 490,543 513,543 521,545 549,545 557,550 565,555 573,551 581,560 589,561 597,559 613,554 621,553 629,554 645,558 653,557 669,552 677,551 685,553 701,550 709,549 733,548 741,544 749,529 757,533 773,541 789,545 797,549 813,550 845,552 861,550 885,554 893,553 901,549 926,549 934,543 950,551 958,549 974,537 981,539 989,537 1006,538 1021,541 1033,540 1046,543 1069,544 1078,547 1084,546 1101,552 1109,539 1117,535";
const rsi = "13,592 29,590 40,592 53,593 64,591 74,592 85,597 93,600 109,606 125,605 133,603 149,606 165,608 181,608 189,611 197,606 205,608 213,607 221,608 237,602 245,603 261,600 269,601 277,597 285,596 301,600 317,607 325,604 333,604 341,602 349,594 373,594 381,591 397,592 405,596 429,595 437,586 445,586 453,583 468,583 478,582 486,585 513,584 525,587 545,586 565,590 573,588 581,594 597,597 621,597 629,599 645,606 653,606 669,601 685,604 701,602 709,600 725,598 733,600 741,598 749,590 757,588 773,588 781,590 797,598 813,599 829,597 845,599 861,597 885,601 901,597 926,597 950,598 958,597 974,592 989,594 997,588 1009,589 1029,586 1045,589 1053,588 1061,590 1069,589 1078,592 1085,591 1095,593 1101,592 1109,587 1117,587";
const wpr = "13,630 20,633 40,633 45,638 53,638 61,633 69,634 77,641 85,653 93,657 101,657 109,655 117,653 125,654 133,652 141,656 157,654 181,654 189,657 197,651 205,658 213,655 221,655 229,653 237,647 245,649 261,645 269,641 277,631 285,629 293,639 301,645 309,651 317,656 325,651 333,651 341,648 349,634 365,633 373,634 381,629 389,631 397,630 405,638 413,639 421,636 429,637 437,625 445,626 461,630 477,627 485,630 501,629 509,627 517,629 533,632 541,630 549,636 557,643 565,653 573,643 581,655 589,656 605,656 613,653 629,656 645,657 661,655 669,651 685,655 701,651 709,645 733,647 741,639 749,627 757,627 765,629 773,626 781,630 789,635 797,648 813,652 829,650 837,656 853,651 861,650 877,657 893,652 901,644 909,642 926,643 934,642 950,645 958,644 966,635 974,629 981,630 989,644 997,637 1004,635 1013,637 1021,631 1029,629 1045,633 1053,630 1061,634 1069,634 1077,638 1085,636 1101,638 1109,625 1117,631";

const out = [];
const rect = (x, y, w, h, fill) => out.push(`<rect x="${x}" y="${y}" width="${w}" height="${h}" fill="${fill}"/>`);
const line = (points, color, width, extra = "") => out.push(`<polyline points="${points}" fill="none" stroke="${color}" stroke-width="${width}" ${extra}/>`);
const text = (x, y, label, extra = "") => out.push(`<text x="${x}" y="${y}" ${extra}>${label}</text>`);
const mark = (points, path, attrs) => points.forEach(p => out.push(`<path d="${path}" transform="translate(${p[0]} ${p[1]})" ${attrs}/>`));

// Panel frames: main, CCI, RSI, %R, empty strip
[[108,524],[526,565],[567,621],[623,659],[661,670]].forEach(p =>
    out.push(`<rect x="12.5" y="${p[0] + 0.5}" width="1313" height="${p[1] - p[0]}" fill="none" stroke="#000"/>`));

// Current price and day separators
rect(13, 254, 1312, 1, "#5f7890");
[165,405,645,885,1173].forEach(x => line(`${x + 0.5},108 ${x + 0.5},670`, "#000", 1, 'stroke-dasharray="4 3"'));

fastUp.forEach(b => rect(barX(b[0]) - 1, b[1], 3, b[2] - b[1], CYAN));
fastDown.forEach(b => rect(barX(b[0]) - 1, b[1], 3, b[2] - b[1], PINK));
candles.forEach((c, i) => {
    const color = isRising(i) ? GREEN : RED;
    rect(barX(i), c[0], 1, c[3] - c[0], color);
    rect(barX(i) - 2, c[1], 5, Math.max(c[2] - c[1], 1), color);
});
slowUp.forEach(b => rect(barX(b[0]) - 2, b[1], 5, b[2] - b[1], BAND_UP));
slowDown.forEach(b => rect(barX(b[0]) - 2, b[1], 5, b[2] - b[1], SCARLET));
envelope.forEach(points => line(points, "#ff00ff", 1, 'stroke-dasharray="6 1"'));
trendLines.forEach(l => line(l[1], l[0], 2));

// Signal arrows
mark([[45,156],[301,364],[429,341],[549,142],[797,256],[1093,271]], "M-6-3L-3-6L2-1L5-6V6H-6L-1 2Z", 'fill="#ff4500"');
mark([[269,420],[349,484],[437,410],[709,404],[973,358],[1109,314]], "M-6 3L-3 6L3 1L6 5V-5H-4L-1-2Z", 'fill="#00ff7f"');
mark([[45,149],[301,341],[557,128],[797,224]], "M0-5V4M-4 0L0 4L4 0", 'fill="none" stroke="#fff" stroke-width="2"');
mark([[277,420],[437,410],[725,416],[1109,314]], "M0 5V-4M-4 0L0-4L4 0", 'fill="none" stroke="#000" stroke-width="2"');
mark([[749,394],[989,400]], "M0-6L5-1H3V5H-3V-1H-5Z", 'fill="none" stroke="#32cd32"');
mark([[796,246],[643,315]], "M0 6L5 1H3V-5H-3V1H-5Z", 'fill="none" stroke="#d02020"');
mark([[357,447]], "M-2-4H2V4H-2Z", 'fill="none" stroke="#32cd32"');

// Indicator levels and curves
[545,548,550,592,594,597,638,645].forEach(y => line(`13,${y + 0.5} 1325,${y + 0.5}`, "#c0c0c0", 1, 'stroke-dasharray="4 3"'));
[cci, rsi, wpr].forEach(points => line(points, LIME, 1));

// Labels
out.push('<path d="M15 115H23L19 119Z"/>');
text(28, 120, "BTCUSD,H4&#160;&#160;&#160; 41625.55 42318.35 41564.55 4");
text(17, 539, "CCI(14) 245.6149");
text(17, 580, "RSI(14) 65.1228");
text(17, 636, "%R(14) -18.8645");
text(1144, 261, "&lt; 0:59:54 (880)", 'class="countdown" fill="#00ffff"');

[["45454.30",125],["44485.30",158],["43544.80",191],["42604.30",224],["40723.30",290],["39782.80",323],["38813.80",356],["37873.30",389],["36932.80",422],["35992.30",455],["35051.80",488],["34111.30",521]].forEach(p => {
    rect(1326, p[1], 3, 1, "#000");
    text(1331, p[1] + 4, p[0]);
});
rect(1327, 249, 60, 11, "#000");
text(1331, 258, "41742.55", 'fill="#aaa"');
[["358.6514",537],["50",549],["0",552],["0.00",552],["-50",554],["-304.6234",562],["100",578],["55",595],["50",598],["45",601],["0",618],["0",634],["-40",642],["-60",649],["-100",656]].forEach(p => text(1329, p[1], p[0]));

["15 Feb 2022","17 Feb 04:00","18 Feb 12:00","21 Feb 20:00","23 Feb 04:00","24 Feb 12:00","25 Feb 20:00","1 Mar 04:00","2 Mar 12:00","3 Mar 20:00","7 Mar 04:00","8 Mar 12:00","9 Mar 20:00","11 Mar 04:00","14 Mar 12:00","15 Mar 20:00","17 Mar 04:00","18 Mar 12:00"].forEach((label, i) => {
    rect(13 + i * 64, 671, 1, 3, "#000");
    text(12 + i * 64, 683, label);
});

document.getElementById("chart").innerHTML = `<g transform="translate(-8 -106)" shape-rendering="crispEdges">${out.join("")}</g>`;
```
